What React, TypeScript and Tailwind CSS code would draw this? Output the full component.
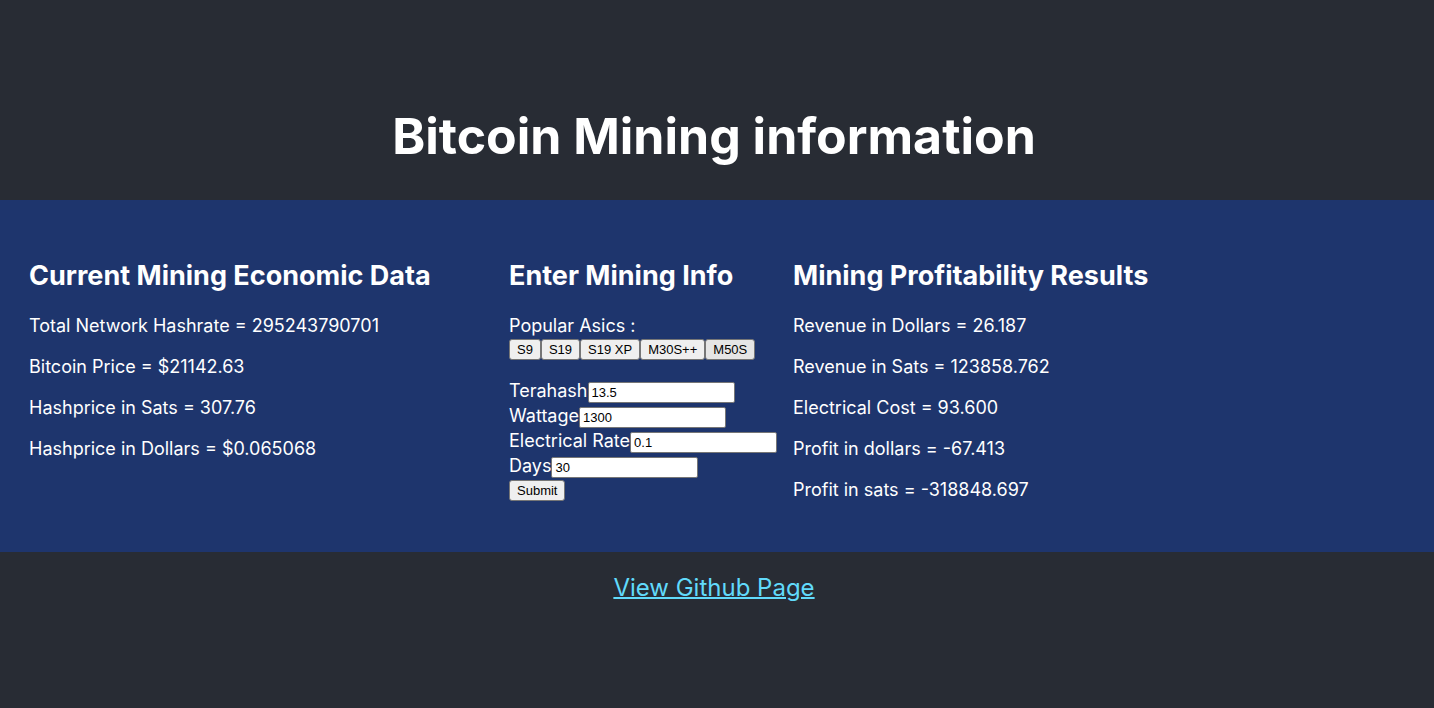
import { useState } from 'react';

const economicData = [
  'Total Network Hashrate = 295243790701',
  'Bitcoin Price = $21142.63',
  'Hashprice in Sats = 307.76',
  'Hashprice in Dollars = $0.065068',
];

const results = [
  'Revenue in Dollars = 26.187',
  'Revenue in Sats = 123858.762',
  'Electrical Cost = 93.600',
  'Profit in dollars = -67.413',
  'Profit in sats = -318848.697',
];

const asics = [
  { name: 'S9', terahash: '13.5', wattage: '1300' },
  { name: 'S19', terahash: '95', wattage: '3250' },
  { name: 'S19 XP', terahash: '140', wattage: '3010' },
  { name: 'M30S++', terahash: '112', wattage: '3472' },
  { name: 'M50S', terahash: '126', wattage: '3276' },
];

const buttonClass =
  "h-[21px] rounded-[3px] border border-[#767676] bg-[#efefef] px-[7px] font-['Liberation_Sans',sans-serif] text-[13px] leading-[18px] text-black last:bg-[#e5e5e5] hover:bg-[#e5e5e5]";

const submitClass =
  "mt-0.5 block h-[21px] rounded-[3px] border border-[#767676] bg-[#efefef] px-[7px] font-['Liberation_Sans',sans-serif] text-[13px] leading-[18px] text-black hover:bg-[#e5e5e5]";

const headingClass = 'text-[27px] leading-8 font-bold whitespace-nowrap';

function Field({ id, label, value, onChange }: { id: string; label: string; value: string; onChange: (v: string) => void }) {
  return (
    <div className="flex h-[25px] items-center whitespace-nowrap">
      <label htmlFor={id}>{label}</label>
      <input
        id={id}
        value={value}
        onChange={(e) => onChange(e.target.value)}
        className="mt-1 h-[21px] w-[147px] rounded-[2px] border border-[#767676] bg-white px-[3px] font-['Liberation_Sans',sans-serif] text-[13px] text-black"
      />
    </div>
  );
}

function DataColumn({ title, lines }: { title: string; lines: string[] }) {
  return (
    <section>
      <h2 className={headingClass}>{title}</h2>
      <div className="mt-[21px] flex flex-col gap-4">
        {lines.map((line) => (
          <p key={line}>{line}</p>
        ))}
      </div>
    </section>
  );
}

export default function App() {
  const [terahash, setTerahash] = useState('13.5');
  const [wattage, setWattage] = useState('1300');
  const [rate, setRate] = useState('0.1');
  const [days, setDays] = useState('30');

  return (
    <div className="flex min-h-screen flex-col items-center justify-center bg-[#282c34] font-[Inter,sans-serif] text-white">
      <h1 className="mb-8 pr-1.5 text-[50px] leading-[64px] font-bold">Bitcoin Mining information</h1>
      <main className="grid w-full grid-cols-[460px_264px_1fr] gap-x-5 bg-[#1e356d] px-[29px] pt-15 pb-[50px] text-[18px] leading-[25px]">
        <DataColumn title="Current Mining Economic Data" lines={economicData} />
        <section>
          <h2 className={headingClass}>Enter Mining Info</h2>
          <p className="mt-[21px]">Popular Asics :</p>
          <div className="mt-px flex">
            {asics.map((asic) => (
              <button
                key={asic.name}
                type="button"
                className={buttonClass}
                onClick={() => {
                  setTerahash(asic.terahash);
                  setWattage(asic.wattage);
                }}
              >
                {asic.name}
              </button>
            ))}
          </div>
          <form className="mt-[18px]" onSubmit={(e) => e.preventDefault()}>
            <Field id="terahash" label="Terahash" value={terahash} onChange={setTerahash} />
            <Field id="wattage" label="Wattage" value={wattage} onChange={setWattage} />
            <Field id="rate" label="Electrical Rate" value={rate} onChange={setRate} />
            <Field id="days" label="Days" value={days} onChange={setDays} />
            <button type="submit" className={submitClass}>Submit</button>
          </form>
        </section>
        <DataColumn title="Mining Profitability Results" lines={results} />
      </main>
      <div className="mt-5 pr-1.5 text-[24px] leading-8">
        <a href="https://github.com" className="text-[#61dafb] underline decoration-2">View Github Page</a>
      </div>
    </div>
  );
}
